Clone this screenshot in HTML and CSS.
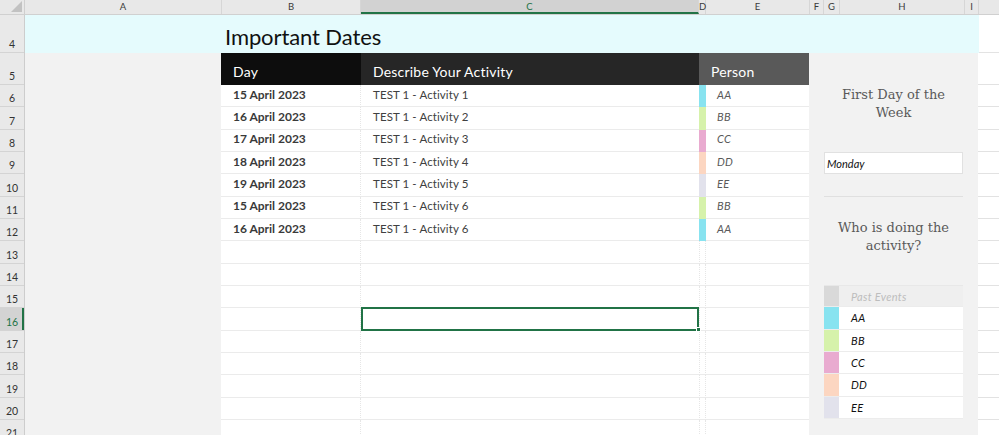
FILE: index.html
```html
<!DOCTYPE html>
<html>
<head>
<meta charset="utf-8">
<link rel="stylesheet" href="styles.css">
</head>
<body>
<div class="sheet">
  <div class="colbar">
    <div class="corner"><span class="tri"></span></div>
    <div class="ch c-a">A</div>
    <div class="ch c-b">B</div>
    <div class="ch c-c active">C</div>
    <div class="ch c-d">D</div>
    <div class="ch c-e">E</div>
    <div class="ch c-f">F</div>
    <div class="ch c-g">G</div>
    <div class="ch c-h">H</div>
    <div class="ch c-i">I</div>
    <div class="ch c-rest"></div>
  </div>
  <div class="main">
    <div class="rowhdrs">
      <div class="rh r4">4</div>
      <div class="rh r5">5</div>
      <div class="rh">6</div>
      <div class="rh">7</div>
      <div class="rh">8</div>
      <div class="rh">9</div>
      <div class="rh">10</div>
      <div class="rh">11</div>
      <div class="rh">12</div>
      <div class="rh">13</div>
      <div class="rh">14</div>
      <div class="rh">15</div>
      <div class="rh active">16</div>
      <div class="rh">17</div>
      <div class="rh">18</div>
      <div class="rh">19</div>
      <div class="rh">20</div>
      <div class="rh">21</div>
    </div>
    <div class="area">
      <div class="band">
        <div class="band-fill"><h1 class="title">Important Dates</h1></div>
        <div class="band-rest"></div>
      </div>
      <div class="body">
        <div class="col-a"></div>
        <div class="table">
          <div class="thead">
            <div class="th th-day">Day</div>
            <div class="th th-act">Describe Your Activity</div>
            <div class="th th-person">Person</div>
          </div>
          <div class="tr"><div class="td day">15 April 2023</div><div class="td act">TEST 1 - Activity 1</div><div class="td stripe aa"></div><div class="td person">AA</div></div>
          <div class="tr"><div class="td day">16 April 2023</div><div class="td act">TEST 1 - Activity 2</div><div class="td stripe bb"></div><div class="td person">BB</div></div>
          <div class="tr"><div class="td day">17 April 2023</div><div class="td act">TEST 1 - Activity 3</div><div class="td stripe cc"></div><div class="td person">CC</div></div>
          <div class="tr"><div class="td day">18 April 2023</div><div class="td act">TEST 1 - Activity 4</div><div class="td stripe dd"></div><div class="td person">DD</div></div>
          <div class="tr"><div class="td day">19 April 2023</div><div class="td act">TEST 1 - Activity 5</div><div class="td stripe ee"></div><div class="td person">EE</div></div>
          <div class="tr"><div class="td day">15 April 2023</div><div class="td act">TEST 1 - Activity 6</div><div class="td stripe bb"></div><div class="td person">BB</div></div>
          <div class="tr"><div class="td day">16 April 2023</div><div class="td act">TEST 1 - Activity 6</div><div class="td stripe aa"></div><div class="td person">AA</div></div>
          <div class="tr"><div class="td day"></div><div class="td act"></div><div class="td stripe"></div><div class="td person"></div></div>
          <div class="tr"><div class="td day"></div><div class="td act"></div><div class="td stripe"></div><div class="td person"></div></div>
          <div class="tr"><div class="td day"></div><div class="td act"></div><div class="td stripe"></div><div class="td person"></div></div>
          <div class="tr"><div class="td day"></div><div class="td act sel"><span class="handle"></span></div><div class="td stripe"></div><div class="td person"></div></div>
          <div class="tr"><div class="td day"></div><div class="td act"></div><div class="td stripe"></div><div class="td person"></div></div>
          <div class="tr"><div class="td day"></div><div class="td act"></div><div class="td stripe"></div><div class="td person"></div></div>
          <div class="tr"><div class="td day"></div><div class="td act"></div><div class="td stripe"></div><div class="td person"></div></div>
          <div class="tr"><div class="td day"></div><div class="td act"></div><div class="td stripe"></div><div class="td person"></div></div>
          <div class="tr"><div class="td day"></div><div class="td act"></div><div class="td stripe"></div><div class="td person"></div></div>
        </div>
        <div class="panel">
          <div class="ptitle first">First Day of the<br>Week</div>
          <div class="daybox">Monday</div>
          <div class="prule"></div>
          <div class="ptitle second">Who is doing the<br>activity?</div>
          <div class="legend">
            <div class="lg past"><span class="sw sw-past"></span><span class="lbl">Past Events</span></div>
            <div class="lg"><span class="sw aa"></span><span class="lbl">AA</span></div>
            <div class="lg"><span class="sw bb"></span><span class="lbl">BB</span></div>
            <div class="lg"><span class="sw cc"></span><span class="lbl">CC</span></div>
            <div class="lg"><span class="sw dd"></span><span class="lbl">DD</span></div>
            <div class="lg"><span class="sw ee"></span><span class="lbl">EE</span></div>
          </div>
        </div>
        <div class="rest"></div>
      </div>
    </div>
  </div>
</div>
</body>
</html>
```

FILE: styles.css
```css
* { box-sizing: border-box; }
html, body { margin: 0; padding: 0; }
body {
  width: 999px;
  height: 435px;
  overflow: hidden;
  background: #ffffff;
  font-family: "Lato", "Noto Sans", sans-serif;
  color: #333;
}
.sheet { width: 999px; height: 435px; overflow: hidden; display: flex; flex-direction: column; }

/* column header bar */
.colbar {
  display: flex;
  height: 15px;
  flex: none;
  background: #e8e8e8;
  border-bottom: 1px solid #d0d0d0;
}
.corner {
  width: 25px;
  flex: none;
  position: relative;
  border-right: 1px solid #cfcfcf;
}
.tri {
  position: absolute;
  right: 2px;
  bottom: 2px;
  width: 0;
  height: 0;
  border-left: 11px solid transparent;
  border-bottom: 11px solid #c2c2c2;
}
.ch {
  flex: none;
  font-size: 9.5px;
  line-height: 14px;
  text-align: center;
  color: #3a3a3a;
  border-right: 1px solid #d6d6d6;
}
.ch.active {
  background: #d2d2d2;
  color: #217346;
  border-bottom: 2px solid #217346;
  line-height: 13px;
}
.c-a { width: 197px; }
.c-b { width: 139px; }
.c-c { width: 338px; }
.c-d { width: 7px; }
.c-e { width: 104px; }
.c-f { width: 14px; }
.c-g { width: 16px; }
.c-h { width: 125px; }
.c-i { width: 14px; }
.c-rest { flex: 1; border-right: none; }

/* main */
.main { display: flex; flex: 1; min-height: 0; }
.rowhdrs {
  width: 25px;
  flex: none;
  background: #e9e9e9;
  border-right: 1px solid #cdcdcd;
  display: flex;
  flex-direction: column;
}
.rh {
  flex: none;
  height: 22.33px;
  border-bottom: 1px solid #d4d4d4;
  font-size: 10.5px;
  color: #333;
  text-align: center;
  display: flex;
  align-items: flex-end;
  justify-content: center;
  padding-bottom: 2px;
}
.rh.r4 { height: 38px; }
.rh.r5 { height: 32px; }
.rh.active {
  background: #d3d3d3;
  color: #217346;
  box-shadow: inset -2px 0 0 #217346;
}

.area { flex: 1; display: flex; flex-direction: column; min-width: 0; }
.band { display: flex; height: 38px; flex: none; }
.band-fill {
  width: 954px;
  background: #e5fbfd;
  padding: 11px 0 0 200px;
}
.title {
  margin: 0;
  font-weight: 400;
  font-size: 22px;
  line-height: 22px;
  color: #111;
  letter-spacing: -0.1px;
}
.band-rest { flex: 1; border-bottom: 1px solid #e3e3e3; }

.body { display: flex; flex: 1; }
.col-a { width: 196px; flex: none; background: #f2f2f2; }

.table { width: 588px; flex: none; display: flex; flex-direction: column; }
.thead { display: flex; height: 32px; flex: none; color: #fff; font-size: 14px; letter-spacing: 0.2px; }
.th { display: flex; align-items: center; padding-top: 4px; }
.th-day { width: 140px; background: #0d0d0d; padding-left: 12px; }
.th-act { width: 338px; background: #262626; padding-left: 12px; }
.th-person { width: 110px; background: #595959; padding-left: 12px; }

.tr { display: flex; height: 22.33px; flex: none; }
.td {
  height: 100%;
  border-bottom: 1px solid #ebebeb;
  display: flex;
  align-items: center;
  padding-bottom: 3px;
}
.day {
  width: 140px;
  padding-left: 12px;
  font-weight: 700;
  font-size: 12px;
  color: #3a3a3a;
  border-right: 1px dotted #e6e6e6;
}
.act {
  width: 338px;
  padding-left: 12px;
  font-size: 11.5px;
  letter-spacing: 0.1px;
  color: #404040;
}
.stripe { width: 7px; border-left: 1px dotted #e6e6e6; border-right: 1px dotted #e6e6e6; }
.person {
  width: 103px;
  padding-left: 11px;
  font-style: italic;
  font-size: 11px;
  color: #5a5a5a;
  letter-spacing: 0.3px;
}
.stripe.aa, .stripe.bb, .stripe.cc, .stripe.dd, .stripe.ee { border-left: none; border-right: none; border-bottom-color: transparent; }
.aa { background: #88e3f0; }
.bb { background: #d6f2ab; }
.cc { background: #e9abd0; }
.dd { background: #fcd6c1; }
.ee { background: #e2e2ec; }

.sel { position: relative; }
.sel::after {
  content: "";
  position: absolute;
  left: 0;
  right: 0;
  top: -1px;
  bottom: -1px;
  border: 2px solid #217346;
}
.handle {
  position: absolute;
  right: -2px;
  bottom: -2px;
  width: 5px;
  height: 5px;
  background: #217346;
  border: 1px solid #fff;
  z-index: 1;
}

/* panel */
.panel {
  width: 169px;
  flex: none;
  background: #f2f2f2;
  padding: 0 15px;
  display: flex;
  flex-direction: column;
}
.ptitle {
  font-family: "DejaVu Serif", "Liberation Serif", serif;
  font-size: 13px;
  line-height: 18px;
  color: #595959;
  text-align: center;
}
.ptitle.first { margin-top: 33px; }
.daybox {
  margin-top: 30px;
  height: 22px;
  background: #fff;
  border: 1px solid #e1e1e1;
  font-style: italic;
  font-size: 11px;
  color: #111;
  display: flex;
  align-items: center;
  padding-left: 2px;
}
.prule { margin-top: 22px; height: 1px; background: #e0e0e0; }
.ptitle.second { margin-top: 22px; }
.legend { margin-top: 30px; display: flex; flex-direction: column; }
.lg {
  display: flex;
  height: 22.33px;
  background: #fff;
  border-bottom: 1px solid #ececec;
}
.lg.past { background: #efefef; border-top: 1px solid #e8e8e8; }
.sw { width: 15px; flex: none; }
.sw-past { background: #d9d9d9; }
.lbl {
  padding-left: 12px;
  font-style: italic;
  font-size: 11px;
  color: #111;
  display: flex;
  align-items: center;
  letter-spacing: 0.3px;
}
.past .lbl { color: #bdbdbd; }

.rest {
  flex: 1;
  background:
    linear-gradient(#e2e2e2, #e2e2e2) 0 31px / 100% 1px no-repeat,
    repeating-linear-gradient(to bottom, transparent 0, transparent 21.33px, #e2e2e2 21.33px, #e2e2e2 22.33px) 0 32px / 100% 400px no-repeat;
}
```
